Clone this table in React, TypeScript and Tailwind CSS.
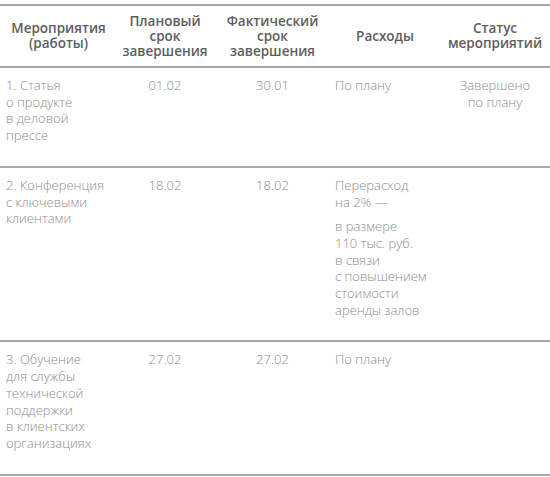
import React from "react";

type Row = {
  name: string[];
  plan: string;
  fact: string;
  cost: string[][];
  status: string[];
};

const rows: Row[] = [
  {
    name: ["1. Статья", "о продукте", "в деловой", "прессе"],
    plan: "01.02",
    fact: "30.01",
    cost: [["По плану"]],
    status: ["Завершено", "по плану"],
  },
  {
    name: ["2. Конференция", "с ключевыми", "клиентами"],
    plan: "18.02",
    fact: "18.02",
    cost: [
      ["Перерасход", "на 2% —"],
      ["в размере", "110 тыс. руб.", "в связи", "с повышением", "стоимости", "аренды залов"],
    ],
    status: [],
  },
  {
    name: ["3. Обучение", "для службы", "технической", "поддержки", "в клиентских", "организациях"],
    plan: "27.02",
    fact: "27.02",
    cost: [["По плану"]],
    status: [],
  },
];

const cols = "grid grid-cols-[115px_100px_115px_110px_110px]";

function Lines({ lines }: { lines: string[] }) {
  return (
    <>
      {lines.map((l, i) => (
        <div key={i} className="whitespace-nowrap">
          {l}
        </div>
      ))}
    </>
  );
}

export default function App() {
  return (
    <div
      className="w-[550px] h-[477px] bg-white pt-[4px]"
      style={{ fontFamily: '"Open Sans", "Noto Sans", sans-serif' }}
    >
      <div className="border-t-2 border-[#a9a9a9]">
        {/* header */}
        <div
          className={`${cols} h-[62px] items-center border-b-2 border-[#a9a9a9] text-[13.5px] leading-[15px] font-semibold text-[#5e5e5e]`}
        >
          <div className="text-center pl-[2px]">
            <Lines lines={["Мероприятия", "(работы)"]} />
          </div>
          <div className="text-center">
            <Lines lines={["Плановый", "срок", "завершения"]} />
          </div>
          <div className="text-center">
            <Lines lines={["Фактический", "срок", "завершения"]} />
          </div>
          <div className="text-center">Расходы</div>
          <div className="text-center">
            <Lines lines={["Статус", "мероприятий"]} />
          </div>
        </div>

        {rows.map((r, i) => (
          <div
            key={i}
            className={`${cols} pt-[9px] pb-[22px] border-b-2 border-[#a9a9a9] text-[13px] leading-[16.7px] font-light text-[#8c8c8c]`}
          >
            <div className="pl-[6px]">
              <Lines lines={r.name} />
            </div>
            <div className="text-center">{r.plan}</div>
            <div className="text-center">{r.fact}</div>
            <div className="pl-[5px] flex flex-col gap-[8px]">
              {r.cost.map((p, j) => (
                <div key={j}>
                  <Lines lines={p} />
                </div>
              ))}
            </div>
            <div className="text-center">
              <Lines lines={r.status} />
            </div>
          </div>
        ))}
      </div>
    </div>
  );
}
